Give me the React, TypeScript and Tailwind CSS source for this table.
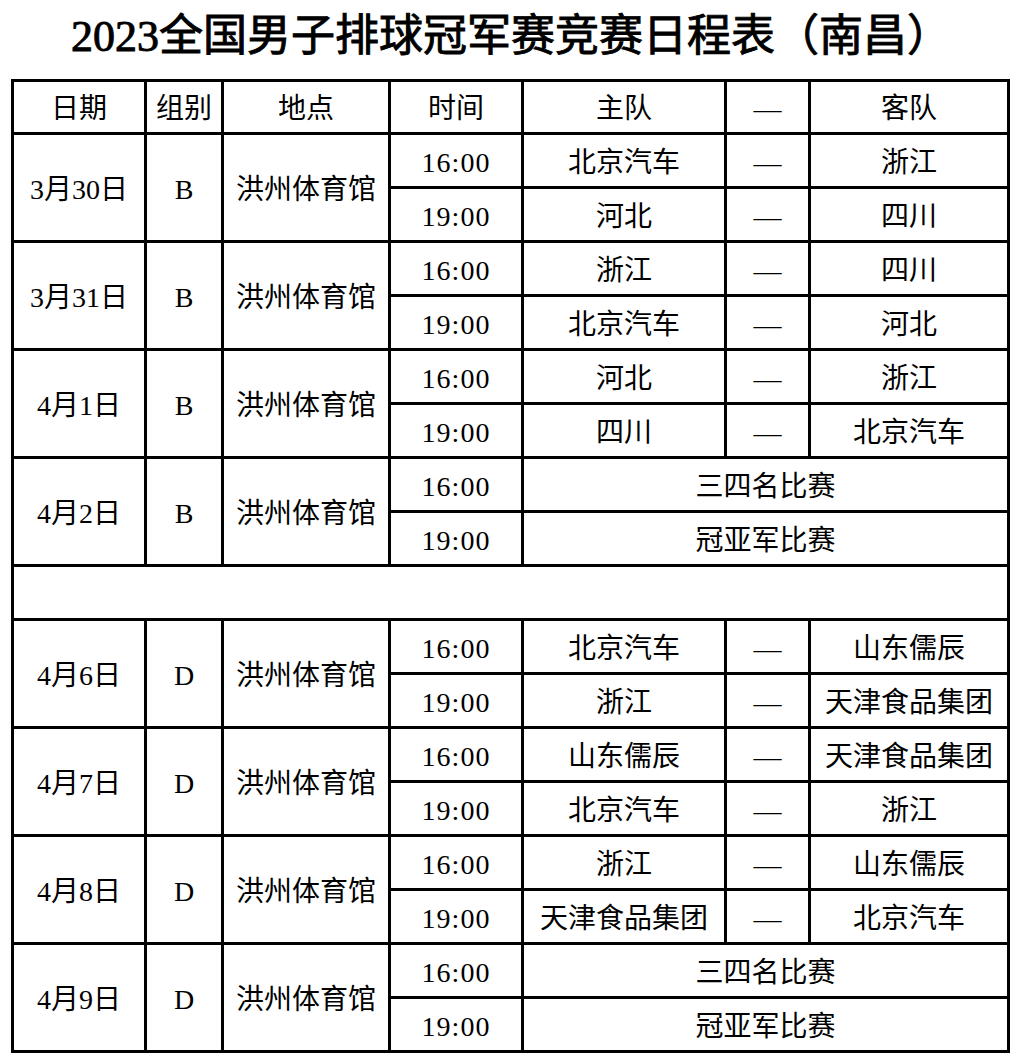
import React from "react";

type Match = { time: string; home?: string; away?: string; special?: string };
type Day = { date: string; group: string; venue: string; matches: Match[] };

const firstStage: Day[] = [
  {
    date: "3月30日",
    group: "B",
    venue: "洪州体育馆",
    matches: [
      { time: "16:00", home: "北京汽车", away: "浙江" },
      { time: "19:00", home: "河北", away: "四川" },
    ],
  },
  {
    date: "3月31日",
    group: "B",
    venue: "洪州体育馆",
    matches: [
      { time: "16:00", home: "浙江", away: "四川" },
      { time: "19:00", home: "北京汽车", away: "河北" },
    ],
  },
  {
    date: "4月1日",
    group: "B",
    venue: "洪州体育馆",
    matches: [
      { time: "16:00", home: "河北", away: "浙江" },
      { time: "19:00", home: "四川", away: "北京汽车" },
    ],
  },
  {
    date: "4月2日",
    group: "B",
    venue: "洪州体育馆",
    matches: [
      { time: "16:00", special: "三四名比赛" },
      { time: "19:00", special: "冠亚军比赛" },
    ],
  },
];

const secondStage: Day[] = [
  {
    date: "4月6日",
    group: "D",
    venue: "洪州体育馆",
    matches: [
      { time: "16:00", home: "北京汽车", away: "山东儒辰" },
      { time: "19:00", home: "浙江", away: "天津食品集团" },
    ],
  },
  {
    date: "4月7日",
    group: "D",
    venue: "洪州体育馆",
    matches: [
      { time: "16:00", home: "山东儒辰", away: "天津食品集团" },
      { time: "19:00", home: "北京汽车", away: "浙江" },
    ],
  },
  {
    date: "4月8日",
    group: "D",
    venue: "洪州体育馆",
    matches: [
      { time: "16:00", home: "浙江", away: "山东儒辰" },
      { time: "19:00", home: "天津食品集团", away: "北京汽车" },
    ],
  },
  {
    date: "4月9日",
    group: "D",
    venue: "洪州体育馆",
    matches: [
      { time: "16:00", special: "三四名比赛" },
      { time: "19:00", special: "冠亚军比赛" },
    ],
  },
];

const cell = "bg-white flex items-center justify-center whitespace-nowrap pt-[4px]";

const DayBlock: React.FC<{ day: Day }> = ({ day }) => (
  <>
    <div className={`${cell} row-span-2 col-start-1`}>{day.date}</div>
    <div className={`${cell} row-span-2 col-start-2`}>{day.group}</div>
    <div className={`${cell} row-span-2 col-start-3`}>{day.venue}</div>
    {day.matches.map((m, i) =>
      m.special ? (
        <React.Fragment key={i}>
          <div className={`${cell} col-start-4 tracking-[1px]`}>{m.time}</div>
          <div className={`${cell} col-start-5 col-span-3`}>{m.special}</div>
        </React.Fragment>
      ) : (
        <React.Fragment key={i}>
          <div className={`${cell} col-start-4 tracking-[1px]`}>{m.time}</div>
          <div className={`${cell} col-start-5`}>{m.home}</div>
          <div className={`${cell} col-start-6`}>—</div>
          <div className={`${cell} col-start-7`}>{m.away}</div>
        </React.Fragment>
      )
    )}
  </>
);

export default function App() {
  return (
    <div
      className="w-[1022px] h-[1064px] bg-white text-black"
      style={{ fontFamily: '"Liberation Serif", "Noto Sans CJK SC", serif' }}
    >
      {/* Title */}
      <div className="h-[79px] flex items-center justify-center pb-[6px]">
        <h1 className="text-[44px] font-normal leading-none [-webkit-text-stroke:0.9px_black]">
          2023全国男子排球冠军赛竞赛日程表（南昌）
        </h1>
      </div>

      {/* Schedule table */}
      <div className="ml-[11px] w-[999px] bg-black p-[3px] grid gap-[3px] grid-cols-[130px_74px_164px_130px_200px_81px_196px] grid-rows-[50px_repeat(17,51px)] text-[28px] leading-none grid-flow-row-dense">
        <div className={cell}>日期</div>
        <div className={cell}>组别</div>
        <div className={cell}>地点</div>
        <div className={cell}>时间</div>
        <div className={cell}>主队</div>
        <div className={cell}>—</div>
        <div className={cell}>客队</div>

        {firstStage.map((d) => (
          <DayBlock key={d.date} day={d} />
        ))}

        <div className="bg-white col-span-7 col-start-1" />

        {secondStage.map((d) => (
          <DayBlock key={d.date} day={d} />
        ))}
      </div>
    </div>
  );
}
